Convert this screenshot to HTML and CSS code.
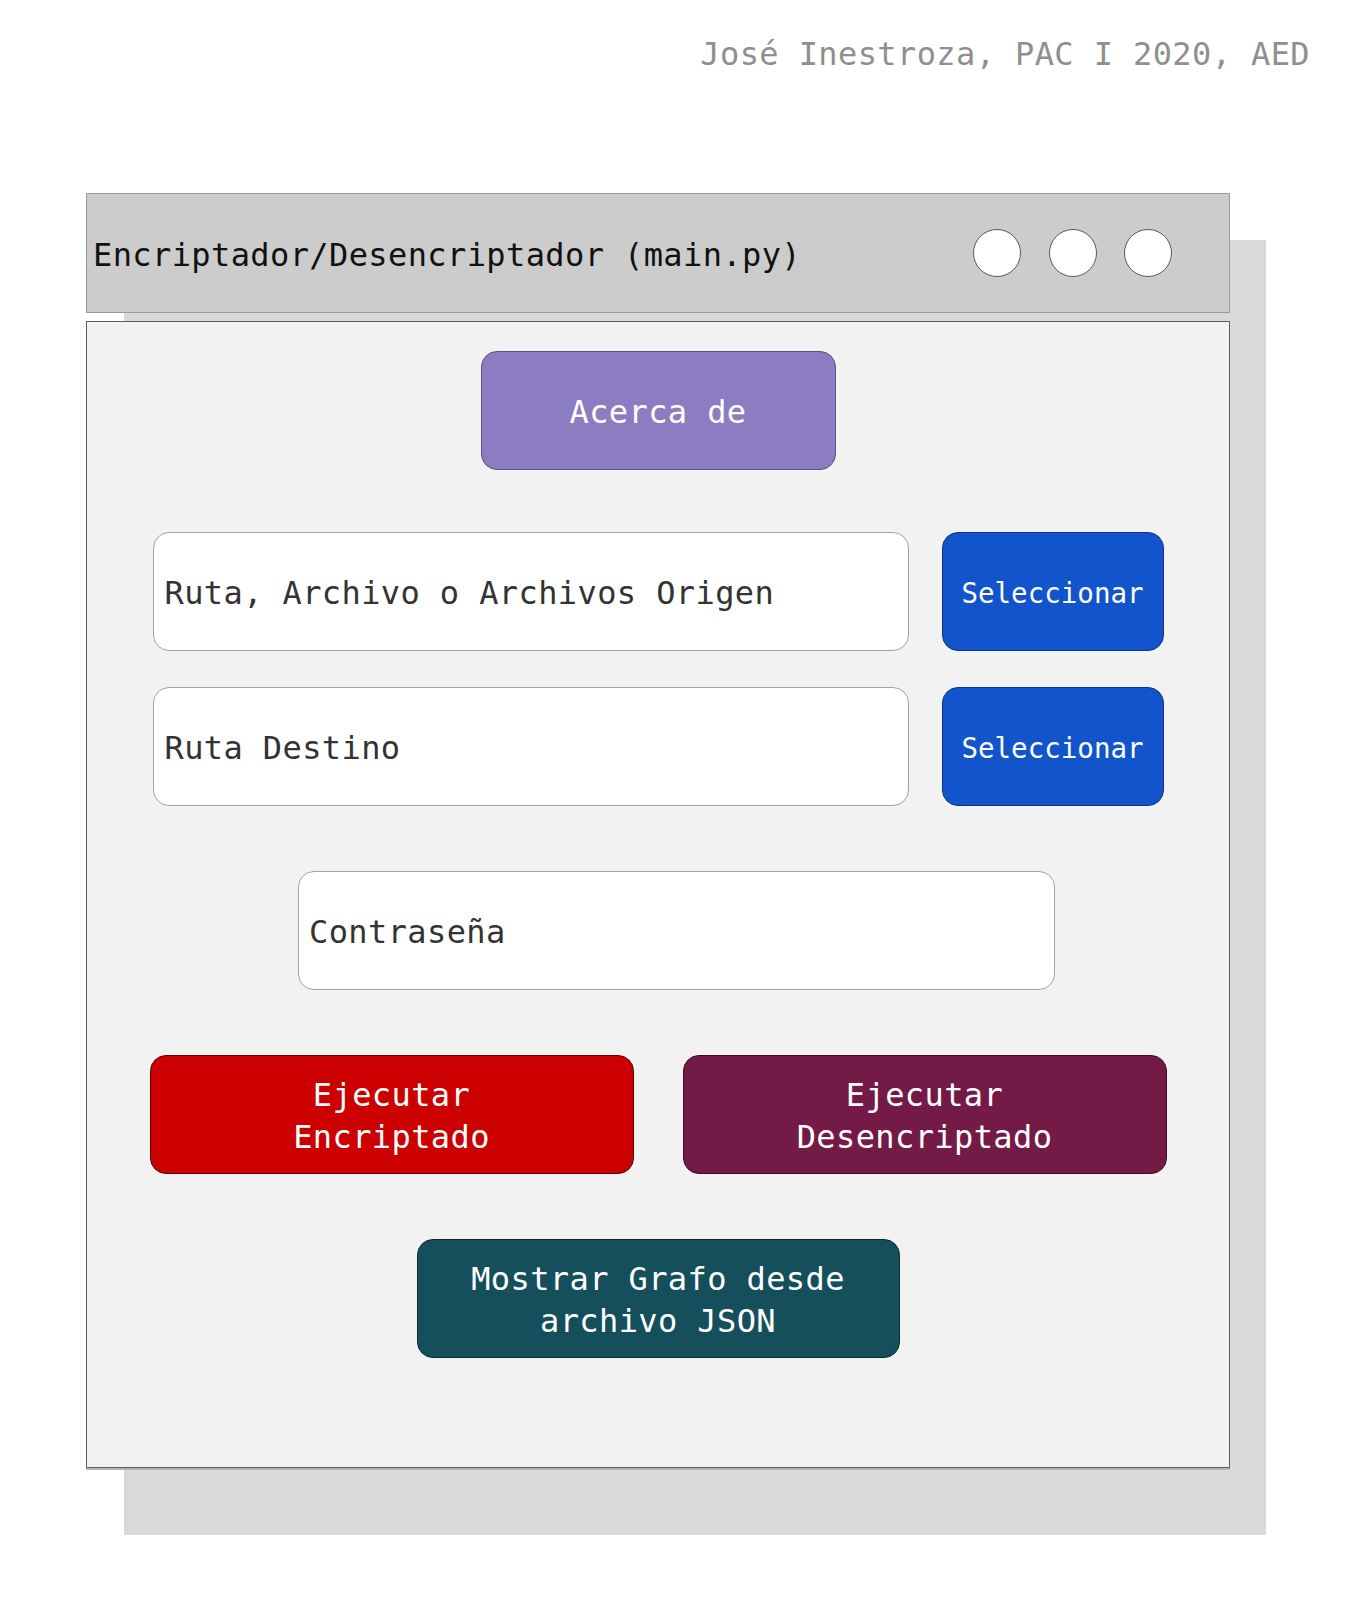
FILE: index.html
```html
<!DOCTYPE html>
<html lang="es">
<head>
<meta charset="utf-8">
<title>Encriptador/Desencriptador</title>
<link rel="stylesheet" href="styles.css">
</head>
<body>
<div class="page">
  <p class="credit">José Inestroza, PAC I 2020, AED</p>
  <div class="window">
    <div class="window-shadow"></div>
    <div class="titlebar">
      <span class="title">Encriptador/Desencriptador (main.py)</span>
      <div class="controls">
        <span class="dot"></span>
        <span class="dot"></span>
        <span class="dot"></span>
      </div>
    </div>
    <div class="content">
      <div class="btn btn-about">Acerca de</div>
      <div class="row row-first">
        <div class="field">Ruta, Archivo o Archivos Origen</div>
        <div class="btn btn-select">Seleccionar</div>
      </div>
      <div class="row row-second">
        <div class="field">Ruta Destino</div>
        <div class="btn btn-select">Seleccionar</div>
      </div>
      <div class="field field-password">Contraseña</div>
      <div class="actions">
        <div class="btn btn-encrypt">Ejecutar<br>Encriptado</div>
        <div class="btn btn-decrypt">Ejecutar<br>Desencriptado</div>
      </div>
      <div class="btn btn-graph">Mostrar Grafo desde<br>archivo JSON</div>
    </div>
  </div>
</div>
</body>
</html>
```

FILE: styles.css
```css
* {
  box-sizing: border-box;
}

html, body {
  margin: 0;
  padding: 0;
  background: #ffffff;
}

body {
  font-family: "DejaVu Sans Mono", "Liberation Mono", monospace;
  font-size: 32px;
  letter-spacing: 0.4px;
  width: 1354px;
  height: 1600px;
}

.page {
  display: flex;
  flex-direction: column;
}

.credit {
  margin: 36px 0 0 0;
  padding-right: 44px;
  height: 37px;
  line-height: 37px;
  text-align: right;
  color: #8f8f8f;
}

.window {
  position: relative;
  z-index: 0;
  margin: 120px 0 0 86px;
  width: 1144px;
  display: flex;
  flex-direction: column;
  gap: 8px;
}

.window-shadow {
  position: absolute;
  left: 38px;
  top: 47px;
  width: 1142px;
  height: 1295px;
  background: #d9d9d9;
  z-index: -1;
}

.titlebar {
  height: 120px;
  background: #cccccc;
  border: 1px solid #9a9a9a;
  display: flex;
  align-items: center;
  justify-content: space-between;
  padding: 0 57px 0 6px;
}

.title {
  color: #111111;
  line-height: 37px;
  padding-top: 4px;
}

.controls {
  display: flex;
  gap: 27.5px;
}

.dot {
  width: 48px;
  height: 48px;
  border-radius: 50%;
  background: #ffffff;
  border: 1px solid #5a5a5a;
}

.content {
  height: 1147px;
  background: #f2f2f2;
  border: 1px solid #5e5e5e;
  box-shadow: 0 2px 0 #b4b4b4;
  display: flex;
  flex-direction: column;
  align-items: center;
  padding-top: 29px;
}

.btn {
  display: flex;
  align-items: center;
  justify-content: center;
  text-align: center;
  color: #ffffff;
  height: 119px;
  border-radius: 16px;
  line-height: 42px;
  padding-top: 3px;
}

.btn-about {
  width: 355px;
  background: #8c7cc1;
  border: 1px solid #5b5380;
}

.row {
  width: 1011px;
  display: flex;
  gap: 33px;
}

.row-first {
  margin-top: 62px;
}

.row-second {
  margin-top: 36px;
}

.field {
  width: 756px;
  height: 119px;
  background: #ffffff;
  border: 1px solid #a3a3a3;
  border-radius: 16px;
  display: flex;
  align-items: center;
  padding-left: 11px;
  padding-top: 2px;
  color: #333333;
}

.btn-select {
  width: 222px;
  background: #1154cb;
  border: 1px solid #0d3580;
  font-size: 27.5px;
  letter-spacing: 0;
}

.field-password {
  margin-top: 65px;
  width: 757px;
  align-self: flex-start;
  margin-left: 211px;
  padding-left: 10px;
}

.actions {
  margin-top: 65px;
  width: 1017px;
  display: flex;
  gap: 49px;
}

.btn-encrypt {
  width: 484px;
  background: #cc0000;
  border: 1px solid #4a0c0c;
}

.btn-decrypt {
  width: 484px;
  background: #741a46;
  border: 1px solid #3b0d24;
}

.btn-graph {
  margin-top: 65px;
  width: 483px;
  background: #144f5b;
  border: 1px solid #0a2a30;
}
```
